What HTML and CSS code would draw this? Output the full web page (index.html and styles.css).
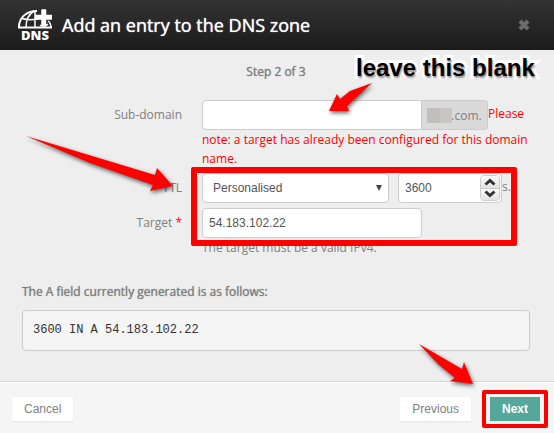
FILE: index.html
```html
<!DOCTYPE html>
<html lang="en">
<head>
  <meta charset="UTF-8">
  <meta name="viewport" content="width=device-width, initial-scale=1.0">
  <title>Add an entry to the DNS zone</title>
  <link rel="stylesheet" href="styles.css">
</head>
<body>
  <form class="dialog">
    <header class="header">
      <svg class="logo" width="34" height="38" viewBox="0 0 34 38" aria-hidden="true">
        <g fill="none" stroke="#fff" stroke-width="2">
          <path d="M1 21C1 12 8 5 19 5"/>
          <path d="M0 21.5H34"/>
          <path d="M8 21C8 14 11 8 16 5M17 5V21M4 12.5C9 14 14 14 20 13M22 19Q26 22 30 18M30 15Q33 17 33 22" stroke-width="1.5"/>
        </g>
        <path d="M24 4h3.5v5.5h6V13h-6v6H24v-6h-6V9.500h6z" fill="#fff" stroke="#fff" stroke-width="1.5" stroke-linejoin="round"/>
        <text class="logo-text" x="17" y="34" text-anchor="middle">DNS</text>
      </svg>
      <h1 class="title">Add an entry to the DNS zone</h1>
      <button type="button" class="close" aria-label="Close">
        <svg width="12" height="12" viewBox="0 0 12 12">
          <path d="M2 2L10 10M10 2L2 10" stroke="#6c6c6c" stroke-width="4"/>
        </svg>
      </button>
    </header>

    <main class="content">
      <p class="step">Step 2 of 3</p>

      <div class="fields">
        <label class="label" for="subdomain">Sub-domain</label>
        <div class="field">
          <span class="input-group">
            <input type="text" id="subdomain" class="input">
            <span class="addon"><span class="mask"></span>t.com.</span>
          </span><span class="warning">Please note: a target has already been configured for this domain name.</span>
        </div>

        <label class="label" for="ttl">TTL</label>
        <div class="field field-row">
          <div class="select-wrap">
            <select id="ttl" class="input select">
              <option>Personalised</option>
            </select>
          </div>
          <div class="number">
            <input type="text" class="number-input" value="3600" aria-label="TTL in seconds">
            <div class="spinner">
              <button type="button" aria-label="Increase">
                <svg width="12" height="8" viewBox="0 0 12 8"><path d="M1.5 6.5L6 2.5L10.5 6.5" fill="none" stroke="#333" stroke-width="3"/></svg>
              </button>
              <button type="button" aria-label="Decrease">
                <svg width="12" height="8" viewBox="0 0 12 8"><path d="M1.5 1.5L6 5.5L10.5 1.5" fill="none" stroke="#333" stroke-width="3"/></svg>
              </button>
            </div>
          </div>
          <span class="unit">s.</span>
        </div>

        <label class="label" for="target">Target <span class="required">*</span></label>
        <div class="field">
          <input type="text" id="target" class="input target" value="54.183.102.22">
          <p class="hint">The target must be a valid IPv4.</p>
        </div>

        <div class="frame frame-fields"></div>
      </div>

      <h2 class="result-title">The A field currently generated is as follows:</h2>
      <pre class="result">3600 IN A 54.183.102.22</pre>
    </main>

    <footer class="footer">
      <button type="button" class="btn">Cancel</button>
      <button type="button" class="btn btn-previous">Previous</button>
      <div class="next">
        <button type="submit" class="btn btn-next">Next</button>
        <div class="frame frame-next"></div>
      </div>
    </footer>

    <p class="note">leave this blank</p>
    <svg class="arrows" width="554" height="433" viewBox="0 0 554 433" aria-hidden="true">
      <g fill="#f00">
        <path d="M26 136L155 175L157 168L173 186L150 191L153 185L90 163Z"/>
        <path d="M372 83L347 106L349 111L329 111L337 94L340 99L350 91Z"/>
        <path d="M419 344L462 369L464 362L473 384L450 381L455 378L438 364Z"/>
      </g>
    </svg>
  </form>
</body>
</html>
```

FILE: styles.css
```css
* {
  box-sizing: border-box;
}

body {
  margin: 0;
  font-family: 'Open Sans', sans-serif;
  font-size: 12px;
  line-height: 19px;
  color: #808080;
  background: #eee;
}

button,
input,
select {
  font-family: 'Liberation Sans', Arial, sans-serif;
  font-size: 12px;
}

.dialog {
  position: relative;
  min-height: 100vh;
  display: flex;
  flex-direction: column;
}

.header {
  display: flex;
  align-items: center;
  height: 50px;
  padding: 0 24px 0 18px;
  background: linear-gradient(#333, #1b1b1b);
}

.logo-text {
  font-size: 13px;
  font-weight: 800;
  fill: #fff;
}

.title {
  flex: 1;
  margin: 0 0 0 10px;
  font-size: 18px;
  line-height: 24px;
  font-weight: normal;
  color: #fff;
  text-shadow: 0 0 1px #fff;
}

.close {
  display: flex;
  padding: 0;
  border: none;
  background: none;
  cursor: pointer;
}

.content {
  flex: 1;
  padding: 12px 24px 30px 22px;
}

.step {
  margin: 0 0 19px;
  text-align: center;
  text-shadow: 0 0 1px #808080;
}

.fields {
  position: relative;
  display: grid;
  grid-template-columns: 160px 1fr;
  gap: 5px 20px;
}

.label {
  padding-top: 5px;
  text-align: right;
}

.required,
.warning {
  color: #f00;
}

.input {
  height: 30px;
  padding: 0 6px;
  border: 1px solid #ccc;
  border-radius: 4px;
  background: #fff;
  color: #555;
}

.input-group {
  display: inline-flex;
  vertical-align: middle;
}

.input-group .input {
  width: 220px;
  border-radius: 4px 0 0 4px;
}

.addon {
  display: flex;
  align-items: center;
  width: 66px;
  padding: 0 5px;
  border: 1px solid #ccc;
  border-left: none;
  border-radius: 0 4px 4px 0;
  background: #dadada;
}

.mask {
  position: relative;
  flex: none;
  width: 25px;
  height: 15px;
  margin-right: -5px;
  background: linear-gradient(90deg, #c0bebe 50%, #cac4c4 50%);
}

.field-row {
  display: flex;
}

.select-wrap {
  position: relative;
}

.select-wrap::after {
  content: '';
  position: absolute;
  right: 7px;
  top: 12px;
  border: 3px solid transparent;
  border-top: 6px solid #444;
  border-bottom: none;
  pointer-events: none;
}

.select {
  width: 187px;
  padding: 0 10px;
  appearance: none;
}

.number {
  display: flex;
  width: 104px;
  margin-left: 9px;
  padding: 1px;
  border: 1px solid #ccc;
  border-radius: 4px;
  background: #fff;
}

.number-input {
  flex: 1;
  min-width: 0;
  padding: 0 5px;
  border: none;
  background: none;
  color: #555;
}

.spinner {
  display: flex;
  flex-direction: column;
  width: 20px;
  border: 1px solid #ccc;
  border-radius: 4px;
  overflow: hidden;
}

.spinner button {
  flex: 1;
  display: flex;
  align-items: center;
  justify-content: center;
  padding: 0;
  border: none;
  background: linear-gradient(#fafafa, #e2e2e2);
}

.spinner button + button {
  border-top: 1px solid #ccc;
}

.unit {
  padding-top: 4px;
}

.target {
  display: block;
  width: 220px;
}

.hint {
  margin: 0;
}

.result-title {
  margin: 25px 0 9px;
  font-size: 12px;
  line-height: 19px;
  font-weight: normal;
  text-shadow: 0 0 1px #808080;
}

.result {
  margin: 0;
  padding: 10px;
  border: 1px solid #ccc;
  border-radius: 4px;
  background: #f5f5f5;
  color: #333;
  font-family: 'Liberation Mono', monospace;
  font-size: 12px;
  line-height: 19px;
}

.footer {
  display: flex;
  align-items: flex-start;
  padding: 15px 14px 12px 12px;
  border-top: 1px solid #d4d4d4;
  box-shadow: inset 0 1px #fff;
  background: #f5f5f5;
}

.btn {
  height: 24px;
  padding: 0 12px;
  border: none;
  background: #fff;
  color: #808080;
  box-shadow: 0 1px 1px #e8e8e8;
  cursor: pointer;
}

.btn-previous {
  margin-left: auto;
}

.next {
  position: relative;
  display: flex;
  margin-left: 19px;
}

.btn-next {
  background: #54a799;
  color: #fff;
  font-weight: bold;
}

/* red annotations drawn over the dialog */
.frame {
  position: absolute;
  border: 4px solid #f00;
  border-radius: 2px;
  pointer-events: none;
}

.frame-fields {
  left: 169px;
  top: 67px;
  width: 326px;
  height: 79px;
  border-width: 6px;
}

.frame-next {
  inset: -7px -8px;
}

.note {
  position: absolute;
  left: 356px;
  top: 53px;
  margin: 0;
  font-family: 'Liberation Sans', Arial, sans-serif;
  font-size: 24px;
  line-height: 30px;
  font-weight: bold;
  color: #000;
  white-space: nowrap;
  -webkit-text-stroke: 6px #fff;
  paint-order: stroke fill;
  text-shadow: 1px 2px 2px #888;
}

.arrows {
  position: absolute;
  left: 0;
  top: 0;
  pointer-events: none;
  filter: drop-shadow(1px 2px 2px rgba(0, 0, 0, 0.6));
}
```
